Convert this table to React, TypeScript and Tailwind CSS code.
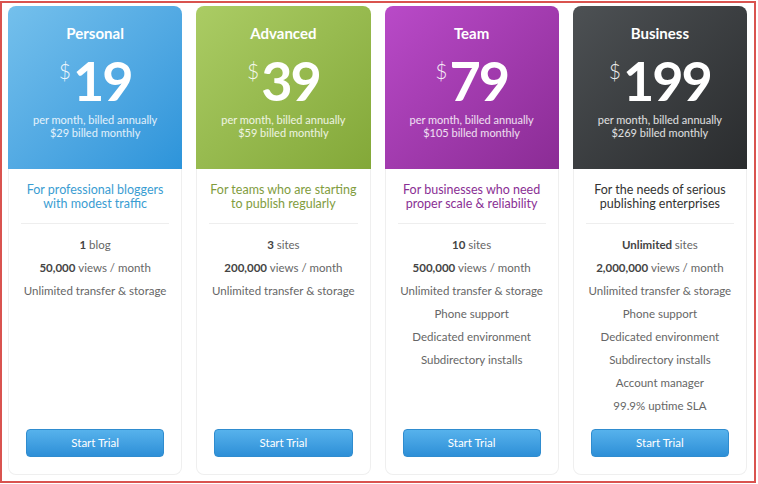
import React from 'react';

type Feature = { bold?: string; text: string };

type Plan = {
  name: string;
  price: string;
  monthly: string;
  tagline: string[];
  header: string;
  taglineColor: string;
  features: Feature[];
};

const plans: Plan[] = [
  {
    name: 'Personal',
    price: '19',
    monthly: '$29 billed monthly',
    tagline: ['For professional bloggers', 'with modest traffic'],
    header: 'bg-linear-to-br from-[#74c0ec] to-[#2c94da]',
    taglineColor: 'text-[#3a9dd2]',
    features: [
      { bold: '1', text: 'blog' },
      { bold: '50,000', text: 'views / month' },
      { text: 'Unlimited transfer & storage' },
    ],
  },
  {
    name: 'Advanced',
    price: '39',
    monthly: '$59 billed monthly',
    tagline: ['For teams who are starting', 'to publish regularly'],
    header: 'bg-linear-to-br from-[#abcc64] to-[#83a838]',
    taglineColor: 'text-[#819c3e]',
    features: [
      { bold: '3', text: 'sites' },
      { bold: '200,000', text: 'views / month' },
      { text: 'Unlimited transfer & storage' },
    ],
  },
  {
    name: 'Team',
    price: '79',
    monthly: '$105 billed monthly',
    tagline: ['For businesses who need', 'proper scale & reliability'],
    header: 'bg-linear-to-br from-[#b94ac8] to-[#8b2c95]',
    taglineColor: 'text-[#8a2f94]',
    features: [
      { bold: '10', text: 'sites' },
      { bold: '500,000', text: 'views / month' },
      { text: 'Unlimited transfer & storage' },
      { text: 'Phone support' },
      { text: 'Dedicated environment' },
      { text: 'Subdirectory installs' },
    ],
  },
  {
    name: 'Business',
    price: '199',
    monthly: '$269 billed monthly',
    tagline: ['For the needs of serious', 'publishing enterprises'],
    header: 'bg-linear-to-br from-[#4d5154] to-[#2a2c2e]',
    taglineColor: 'text-[#333333]',
    features: [
      { bold: 'Unlimited', text: 'sites' },
      { bold: '2,000,000', text: 'views / month' },
      { text: 'Unlimited transfer & storage' },
      { text: 'Phone support' },
      { text: 'Dedicated environment' },
      { text: 'Subdirectory installs' },
      { text: 'Account manager' },
      { text: '99.9% uptime SLA' },
    ],
  },
];

const PlanCard: React.FC<{ plan: Plan }> = ({ plan }) => (
  <div className="flex flex-col h-full">
    <div className={`${plan.header} h-[163px] rounded-t-[8px] flex flex-col items-center text-white`}>
      <h2 className="mt-[18px] text-[15px] leading-[18px] font-bold">{plan.name}</h2>
      <div className="mt-[12px] flex items-start">
        <span className="text-[21px] leading-[21px] font-light mt-[6px] mr-[2px] opacity-90">$</span>
        <span className="text-[54px] leading-[54px] font-bold tracking-[-2px]">{plan.price}</span>
      </div>
      <p className="mt-[5px] text-[11px] leading-[13px] text-white/85">per month, billed annually</p>
      <p className="text-[11px] leading-[14px] text-white/85">{plan.monthly}</p>
    </div>
    <div className="flex-1 flex flex-col border-x border-b border-[#efefef] rounded-b-[8px]">
      <div className={`mt-[14px] text-center text-[12.5px] leading-[14px] ${plan.taglineColor}`}>
        {plan.tagline.map((l) => (
          <div key={l}>{l}</div>
        ))}
      </div>
      <div className="mx-3 mt-[12px] border-t border-[#eeeeee]" />
      <ul className="mt-[9px] text-center text-[11.5px] leading-[23px] text-[#666666]">
        {plan.features.map((f) => (
          <li key={f.text + (f.bold ?? '')}>
            {f.bold && <span className="font-bold text-[#444444]">{f.bold} </span>}
            {f.text}
          </li>
        ))}
      </ul>
      <div className="mt-auto mb-[17px] px-[17px]">
        <button className="w-full h-[28px] rounded-[4px] border border-[#2f8ccf] bg-linear-to-b from-[#56b2ec] to-[#2d8fd7] text-white text-[11.5px]">
          Start Trial
        </button>
      </div>
    </div>
  </div>
);

export default function App() {
  return (
    <div className="w-[758px] h-[484px] bg-white" style={{ fontFamily: 'Lato, "Open Sans", sans-serif' }}>
      <div className="mt-[1px] w-[756px] h-[482px] border-2 border-[#d9534f] pt-[3px] pl-[6px] pr-[7px] pb-[6px]">
        <div className="grid grid-cols-4 gap-[14px] h-full">
          {plans.map((p) => (
            <PlanCard key={p.name} plan={p} />
          ))}
        </div>
      </div>
    </div>
  );
}
